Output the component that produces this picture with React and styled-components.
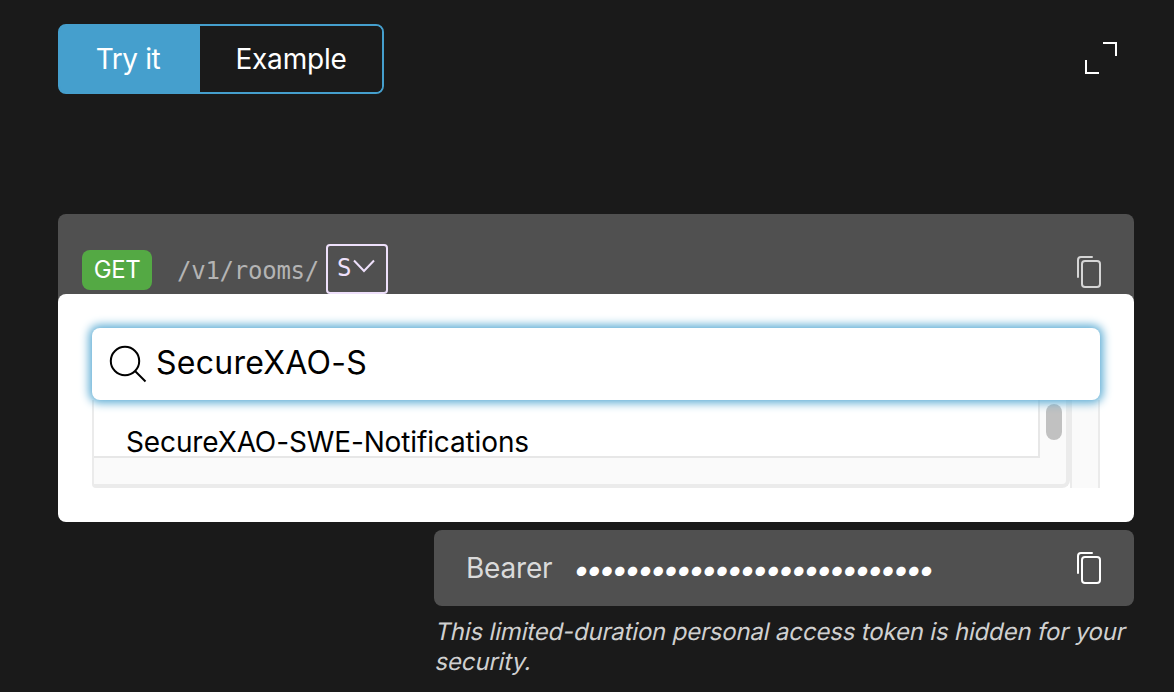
import React from 'react';
import styled, { createGlobalStyle } from 'styled-components';

const Global = createGlobalStyle`
  * { box-sizing: border-box; }
  html, body { margin: 0; background: #1a1a1a; }
  body { font-family: Inter, "Liberation Sans", sans-serif; overflow: hidden; }
`;

const Page = styled.main`
  width: 1174px;
  height: 692px;
  padding: 24px 40px 0 58px;
  background: #1a1a1a;
  overflow: hidden;
`;

const Header = styled.header`
  display: flex;
  justify-content: space-between;
  align-items: flex-start;
  height: 190px;
`;

const Tabs = styled.div`
  display: flex;
  width: 326px;
  height: 70px;
  border: 2px solid #459fcd;
  border-radius: 8px;
  background: linear-gradient(90deg, #459fcd 140px, #1a1a1a 140px);
  overflow: hidden;
`;

const Tab = styled.button`
  flex: ${(p) => (p.$active ? '0 0 140px' : '1')};
  padding: ${(p) => (p.$active ? '0 4px 2px 0' : '0 0 2px')};
  border: 0;
  background: ${(p) => (p.$active ? '#459fcd' : '#1a1a1a')};
  color: #fff;
  font: 400 28px/66px Inter, sans-serif;
  letter-spacing: ${(p) => p.$tracking};
`;

const ExpandIcon = styled.svg`
  display: block;
  margin: 17px 16px 0 0;
`;

const UrlBar = styled.div`
  display: flex;
  align-items: flex-start;
  height: 92px;
  padding: 30px 32px 0 24px;
  border-radius: 8px;
  background: #505050;
`;

const Method = styled.span`
  width: 70px;
  height: 40px;
  margin-top: 6px;
  border-radius: 8px;
  background: #54a944;
  color: #fff;
  font-size: 24px;
  line-height: 40px;
  letter-spacing: -0.5px;
  text-align: center;
`;

const Path = styled.span`
  width: 149px;
  margin: 6px 0 0 25px;
  color: #b4b4b4;
  font: 24px/42px "DejaVu Sans Mono", monospace;
  letter-spacing: -0.25px;
`;

const Variable = styled.button`
  display: flex;
  width: 62px;
  height: 50px;
  padding: 0 0 0 9px;
  border: 2px solid #eee0fb;
  border-radius: 4px;
  background: transparent;
  color: #eee0fb;
  font: 24px/44px "DejaVu Sans Mono", monospace;
`;

const Chevron = styled.svg`
  margin: 13px 0 0 2px;
`;

const CopyIcon = styled.svg`
  display: block;
  flex: none;
  margin: ${(p) => p.$top}px 0 0 auto;
  color: ${(p) => p.$color};
`;

const Popover = styled.section`
  position: relative;
  height: 228px;
  margin-top: -12px;
  padding: 34px;
  border-radius: 8px;
  background: #fff;
`;

const SearchBox = styled.div`
  position: relative;
  z-index: 1;
  display: flex;
  height: 72px;
  padding: 0 16px;
  border-radius: 8px;
  background: #fff;
  box-shadow: 0 0 10px 3px #5cacd4;
`;

const SearchIcon = styled.svg`
  margin-top: 16px;
`;

const Query = styled.span`
  margin-left: 8px;
  color: #000;
  font-size: 32px;
  line-height: 70px;
  letter-spacing: 0.25px;
`;

const Results = styled.div`
  display: flex;
  height: 88px;
`;

const ScrollArea = styled.div`
  display: flex;
  align-items: flex-start;
  width: 978px;
  height: 88px;
  border: solid #ebebeb;
  border-width: 0 4px 4px 2px;
  border-radius: 0 0 8px 4px;
  background: #fafafa;
`;

const Result = styled.div`
  width: 946px;
  height: 58px;
  padding-left: 32px;
  border: solid #e7e7e7;
  border-width: 0 2px 2px 0;
  background: #fff;
  color: #000;
  font-size: 28px;
  line-height: 85px;
  letter-spacing: -0.13px;
  white-space: nowrap;
`;

const Thumb = styled.div`
  width: 16px;
  height: 36px;
  margin: 4px 0 0 6px;
  border-radius: 8px;
  background: #c1c1c1;
`;

const Gutter = styled.div`
  width: 30px;
  border: solid #ebebeb;
  border-width: 0 2px;
  background: #fafafa;
`;

const Authorization = styled.section`
  width: 700px;
  margin: 8px 0 0 376px;
`;

const TokenBar = styled.div`
  display: flex;
  height: 76px;
  padding: 0 32px;
  border-radius: 8px;
  background: #505050;
`;

const Scheme = styled.span`
  width: 107px;
  color: #dadada;
  font-size: 28px;
  line-height: 77px;
  letter-spacing: -0.2px;
`;

const Secret = styled.span`
  color: #fff;
  font: italic 30px/79px Inter, sans-serif;
  letter-spacing: -4.1px;
  white-space: nowrap;
`;

const Note = styled.p`
  margin: 11px 0 0 2px;
  color: #d0d0d0;
  font-size: 24px;
  line-height: 30px;
  letter-spacing: -0.18px;
  white-space: nowrap;
`;

/* Slants the upright letterforms, keeping the two-storey "a". */
const NoteLine = styled.span`
  display: block;
  transform: skewX(-12deg);
`;

const Copy = ({ top, color }) => (
  <CopyIcon $top={top} $color={color} width="26" height="34" viewBox="0 0 26 34" fill="none" stroke="currentColor" strokeWidth="2" strokeLinecap="round">
    <rect x="6" y="6" width="18" height="26" rx="3" />
    <path d="M2 22V5a3 3 0 0 1 3-3h11" />
  </CopyIcon>
);

export default function App() {
  return (
    <Page>
      <Global />
      <Header>
        <Tabs>
          <Tab $active $tracking="-0.4px">Try it</Tab>
          <Tab $tracking="-0.2px">Example</Tab>
        </Tabs>
        <ExpandIcon width="34" height="34" viewBox="0 0 34 34" fill="none" stroke="#fff" strokeWidth="2">
          <path d="M19 2h13v13M2 19v13h13" />
        </ExpandIcon>
      </Header>
      <UrlBar>
        <Method>GET</Method>
        <Path>/v1/rooms/</Path>
        <Variable>
          S
          <Chevron width="22" height="14" viewBox="0 0 22 14" fill="none" stroke="currentColor" strokeWidth="2">
            <path d="M1 1.5 11 12 21 1.5" />
          </Chevron>
        </Variable>
        <Copy top={11} color="#d5d5d5" />
      </UrlBar>
      <Popover>
        <SearchBox>
          <SearchIcon width="40" height="40" viewBox="0 0 40 40" fill="none" stroke="#000" strokeWidth="2">
            <circle cx="17" cy="17" r="14.2" />
            <path d="m27 27 10.5 10.5" />
          </SearchIcon>
          <Query>SecureXAO-S</Query>
        </SearchBox>
        <Results>
          <ScrollArea>
            <Result>SecureXAO-SWE-Notifications</Result>
            <Thumb />
          </ScrollArea>
          <Gutter />
        </Results>
      </Popover>
      <Authorization>
        <TokenBar>
          <Scheme>Bearer</Scheme>
          <Secret>{'•'.repeat(28)}</Secret>
          <Copy top={21} color="#fff" />
        </TokenBar>
        <Note>
          <NoteLine>This limited-duration personal access token is hidden for your</NoteLine>
          <NoteLine>security.</NoteLine>
        </Note>
      </Authorization>
    </Page>
  );
}
